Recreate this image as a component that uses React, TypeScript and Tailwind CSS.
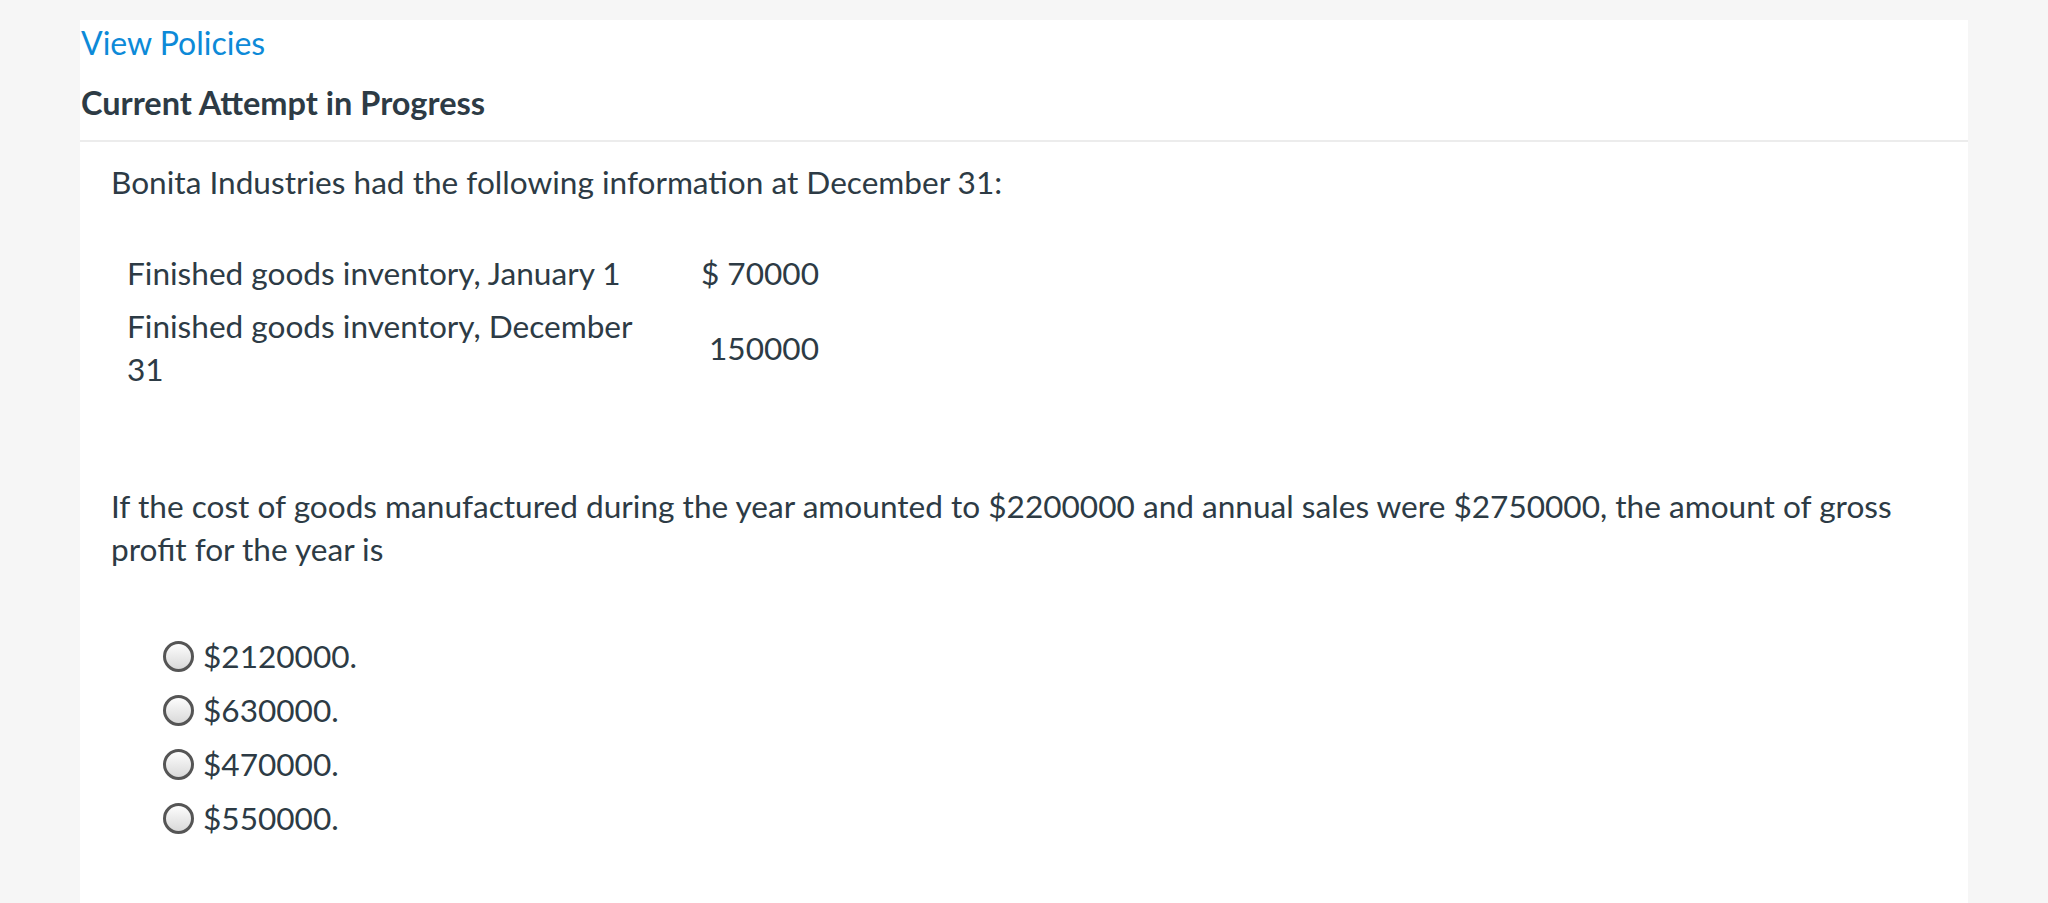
import React from 'react';

const rows = [
  { label: 'Finished goods inventory, January 1', value: '$ 70000' },
  { label: 'Finished goods inventory, December 31', value: '150000' },
];

const options = ['$2120000.', '$630000.', '$470000.', '$550000.'];

const Radio: React.FC = () => (
  <span className="inline-block w-[31px] h-[31px] rounded-full border-[3px] border-[#555] bg-gradient-to-b from-[#fdfdfd] to-[#d9d9d9] shrink-0" />
);

export default function App() {
  return (
    <div className="min-h-screen bg-[#f6f6f6] pt-[20px] pl-[80px] pr-[80px] font-['Lato','Open_Sans',sans-serif] text-[#2d3b45]">
      <div className="bg-white min-h-[883px]">
        <div className="pt-[5px] pl-px">
          <a href="#" onClick={(e) => e.preventDefault()} className="block text-[32px] leading-[36px] text-[#0d8ad8]">
            View Policies
          </a>
          <h2 className="mt-[24px] text-[32.5px] leading-[36px] font-bold">Current Attempt in Progress</h2>
        </div>
        <div className="mt-[19px] h-[2px] bg-[#ececec]" />

        <div className="px-[31px] text-[31.6px] leading-[43px]">
          <p className="mt-[19px]">Bonita Industries had the following information at December 31:</p>

          <table className="mt-[43px] ml-[16px] border-collapse">
            <tbody>
              {rows.map((r) => (
                <tr key={r.label}>
                  <td className="w-[525px] py-[5px] align-middle">{r.label}</td>
                  <td className="w-[167px] py-[5px] text-right align-middle">{r.value}</td>
                </tr>
              ))}
            </tbody>
          </table>

          <p className="mt-[89px]">
            If the cost of goods manufactured during the year amounted to $2200000 and annual sales were $2750000, the amount of gross profit for the year is
          </p>

          <div className="mt-[58px] ml-[52px] flex flex-col">
            {options.map((o) => (
              <label key={o} className="flex items-center gap-[9px] h-[54px]">
                <Radio />
                <span>{o}</span>
              </label>
            ))}
          </div>
        </div>
      </div>
    </div>
  );
}
